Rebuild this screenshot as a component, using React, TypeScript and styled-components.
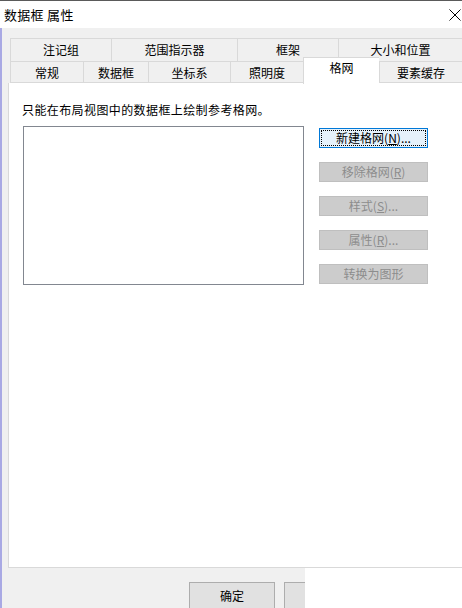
import styled, { createGlobalStyle } from "styled-components";

const GlobalStyle = createGlobalStyle`
  html, body {
    margin: 0;
    padding: 0;
    background: #ffffff;
  }
  body {
    font-family: "Noto Sans CJK SC", "Microsoft YaHei", sans-serif;
    font-size: 12px;
    color: #000000;
  }
`;

const Window = styled.div`
  width: 462px;
  height: 608px;
  overflow: hidden;
  display: flex;
  flex-direction: column;
  background: #ffffff;
  border-top: 1px solid #5a5a5a;
  box-sizing: border-box;
`;

const TitleBar = styled.div`
  height: 27px;
  flex-shrink: 0;
  display: flex;
  align-items: center;
  justify-content: space-between;
  padding: 0 1px 0 4px;
  background: #ffffff;
`;

const Title = styled.span`
  font-size: 13px;
  line-height: 16px;
  letter-spacing: 0.3px;
`;

const CloseIcon = styled.svg`
  width: 12px;
  height: 12px;
  margin-top: 1px;
`;

const Body = styled.div`
  flex: 1;
  display: flex;
  flex-direction: column;
  background: #f0f0f0;
  border-left: 2px solid #a9a9e4;
  padding-top: 10px;
`;

const Tabs = styled.div`
  margin-left: 8px;
  display: flex;
  flex-direction: column;
`;

const TabRow = styled.div`
  display: flex;
  height: ${(p: { h: number }) => p.h}px;
`;

const Tab = styled.div<{ w: number; active?: boolean; top?: boolean }>`
  width: ${(p) => p.w}px;
  box-sizing: border-box;
  display: flex;
  align-items: center;
  justify-content: center;
  border: 1px solid #d9d9d9;
  border-right: none;
  border-bottom: ${(p) => (p.top ? "none" : "1px solid #d9d9d9")};
  background: ${(p) => (p.active ? "#ffffff" : "#f0f0f0")};
  line-height: 14px;
  padding-top: ${(p) => (p.top ? 0 : 2)}px;
  ${(p) =>
    p.active &&
    `
    position: relative;
    z-index: 1;
    margin-top: -4px;
    height: 27px;
    border-bottom: none;
    padding-top: 0;
    padding-bottom: 6px;
  `}
`;

const Panel = styled.div`
  margin-left: 6px;
  height: 485px;
  background: #ffffff;
  border-left: 1px solid #d9d9d9;
  border-bottom: 1px solid #d9d9d9;
  box-sizing: border-box;
  padding: 19px 0 0 13px;
`;

const Hint = styled.div`
  line-height: 16px;
  letter-spacing: 0.4px;
`;

const Content = styled.div`
  display: flex;
  margin-top: 8px;
  margin-left: 1px;
  gap: 15px;
`;

const ListBox = styled.div`
  width: 281px;
  height: 159px;
  border: 1px solid #828790;
  box-sizing: border-box;
  background: #ffffff;
`;

const ButtonColumn = styled.div`
  display: flex;
  flex-direction: column;
  gap: 14px;
  padding-top: 2px;
`;

const SideButton = styled.div<{ focused?: boolean }>`
  width: 109px;
  height: 20px;
  box-sizing: border-box;
  display: flex;
  align-items: center;
  justify-content: center;
  line-height: 14px;
  border: 1px solid ${(p) => (p.focused ? "#0078d7" : "#bfbfbf")};
  background: ${(p) => (p.focused ? "#e5f1fb" : "#cccccc")};
  color: ${(p) => (p.focused ? "#000000" : "#8d8d8d")};
  outline: ${(p) => (p.focused ? "1px dotted #000000" : "none")};
  outline-offset: -3px;
`;

const Footer = styled.div`
  flex: 1;
  display: flex;
`;

const FooterBar = styled.div`
  width: 303px;
  display: flex;
  gap: 9px;
  padding: 14px 0 0 187px;
  box-sizing: border-box;
  overflow: hidden;
`;

const FooterFill = styled.div`
  flex: 1;
  background: #ffffff;
`;

const DialogButton = styled.div`
  width: 86px;
  height: 30px;
  flex-shrink: 0;
  box-sizing: border-box;
  border: 1px solid #adadad;
  background: #e1e1e1;
  display: flex;
  justify-content: center;
  padding-top: 5px;
  line-height: 16px;
`;

const row1 = [
  { label: "注记组", w: 101 },
  { label: "范围指示器", w: 126 },
  { label: "框架", w: 101 },
  { label: "大小和位置", w: 124 },
];

const row2 = [
  { label: "常规", w: 73 },
  { label: "数据框", w: 65 },
  { label: "坐标系", w: 82 },
  { label: "照明度", w: 73 },
  { label: "格网", w: 76, active: true },
  { label: "要素缓存", w: 83 },
];

export default function App() {
  return (
    <>
      <GlobalStyle />
      <Window>
        <TitleBar>
          <Title>数据框 属性</Title>
          <CloseIcon viewBox="0 0 12 12">
            <path d="M0.5 0.5 L11.5 11.5 M11.5 0.5 L0.5 11.5" stroke="#000" strokeWidth="1" />
          </CloseIcon>
        </TitleBar>
        <Body>
          <Tabs>
            <TabRow h={23}>
              {row1.map((t) => (
                <Tab key={t.label} w={t.w} top>
                  {t.label}
                </Tab>
              ))}
            </TabRow>
            <TabRow h={22}>
              {row2.map((t) => (
                <Tab key={t.label} w={t.w} active={t.active}>
                  {t.label}
                </Tab>
              ))}
            </TabRow>
          </Tabs>
          <Panel>
            <Hint>只能在布局视图中的数据框上绘制参考格网。</Hint>
            <Content>
              <ListBox />
              <ButtonColumn>
                <SideButton focused>
                  新建格网(<u>N</u>)...
                </SideButton>
                <SideButton>
                  移除格网(<u>R</u>)
                </SideButton>
                <SideButton>
                  样式(<u>S</u>)...
                </SideButton>
                <SideButton>
                  属性(<u>R</u>)...
                </SideButton>
                <SideButton>转换为图形</SideButton>
              </ButtonColumn>
            </Content>
          </Panel>
          <Footer>
            <FooterBar>
              <DialogButton>确定</DialogButton>
              <DialogButton />
            </FooterBar>
            <FooterFill />
          </Footer>
        </Body>
      </Window>
    </>
  );
}
